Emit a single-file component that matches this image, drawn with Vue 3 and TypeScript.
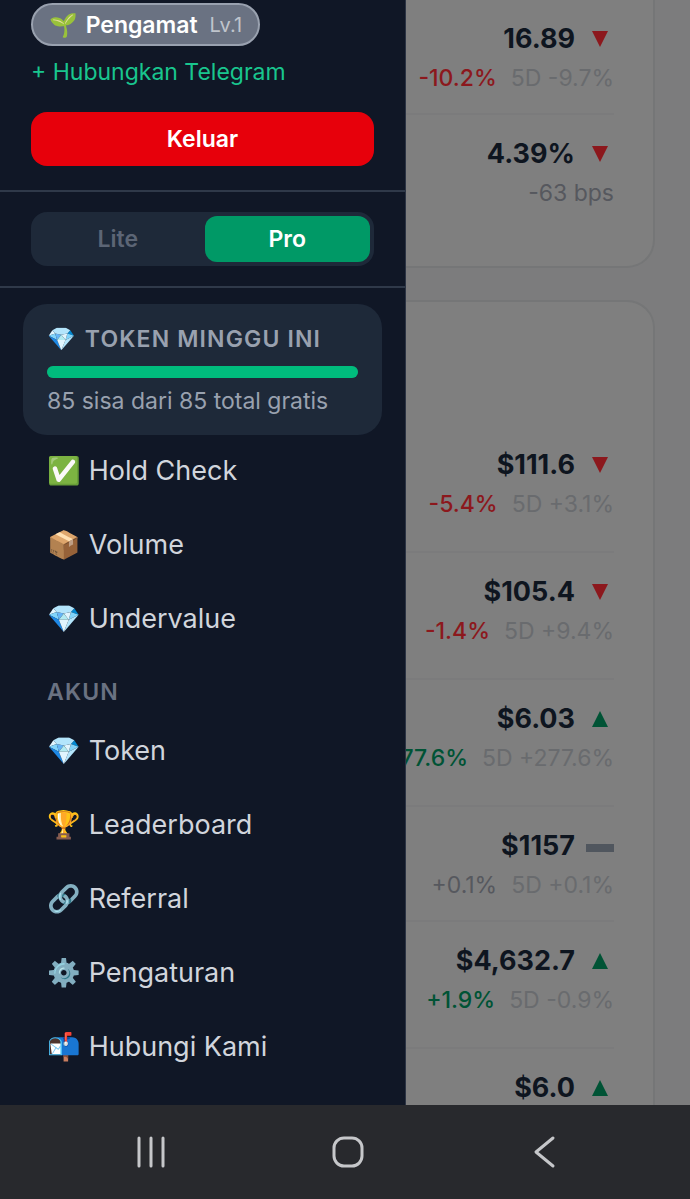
<script setup lang="ts">
import { ref } from 'vue'

type Trend = 'up' | 'down' | 'flat'
interface Quote {
  value: string
  trend: Trend
  change: string
  tone: 'pos' | 'neg' | 'mute'
  week?: string
  tall?: boolean
}
interface MenuItem {
  icon: string
  label: string
}

const rates: Quote[] = [
  { value: '16.89', trend: 'down', change: '-10.2%', tone: 'neg', week: '5D -9.7%' },
  { value: '4.39%', trend: 'down', change: '-63 bps', tone: 'mute' },
]
const commodities: Quote[] = [
  { value: '$111.6', trend: 'down', change: '-5.4%', tone: 'neg', week: '5D +3.1%', tall: true },
  { value: '$105.4', trend: 'down', change: '-1.4%', tone: 'neg', week: '5D +9.4%', tall: true },
  { value: '$6.03', trend: 'up', change: '+277.6%', tone: 'pos', week: '5D +277.6%', tall: true },
  { value: '$1157', trend: 'flat', change: '+0.1%', tone: 'mute', week: '5D +0.1%' },
  { value: '$4,632.7', trend: 'up', change: '+1.9%', tone: 'pos', week: '5D -0.9%', tall: true },
  { value: '$6.0', trend: 'up', change: '', tone: 'pos' },
]
const groups: Quote[][] = [rates, commodities]

const tools: MenuItem[] = [
  { icon: '✅', label: 'Hold Check' },
  { icon: '📦', label: 'Volume' },
  { icon: '💎', label: 'Undervalue' },
]
const account: MenuItem[] = [
  { icon: '💎', label: 'Token' },
  { icon: '🏆', label: 'Leaderboard' },
  { icon: '🔗', label: 'Referral' },
  { icon: '⚙️', label: 'Pengaturan' },
  { icon: '📬', label: 'Hubungi Kami' },
]

const shapes: Record<Trend, string> = {
  up: 'M14 6 22 22H6Z',
  down: 'M6 6H22L14 22Z',
  flat: 'M0 12H28V20H0Z',
}

const mode = ref<'Lite' | 'Pro'>('Pro')
const total = 85
const left = ref(85)
</script>

<template>
  <div class="screen">
    <div class="stage">
      <main class="page">
        <section v-for="(group, g) in groups" :key="g" class="card" :class="{ first: g === 0 }">
          <div v-for="q in group" :key="q.value" class="row" :class="{ tall: q.tall }">
            <div class="value">
              <span>{{ q.value }}</span>
              <svg class="trend" :class="q.trend" viewBox="0 0 28 28" aria-hidden="true">
                <path :d="shapes[q.trend]" />
              </svg>
            </div>
            <div class="delta">
              <span :class="q.tone">{{ q.change }}</span>
              <span v-if="q.week" class="week">{{ q.week }}</span>
            </div>
          </div>
        </section>
      </main>

      <aside class="drawer">
        <div class="profile">
          <div class="badge">
            <span class="badge-icon">🌱</span>
            <strong>Pengamat</strong>
            <small>Lv.1</small>
          </div>
          <a class="connect" href="#telegram">+ Hubungkan Telegram</a>
          <button class="logout" type="button">Keluar</button>
        </div>

        <div class="mode">
          <div class="switch">
            <button type="button" :class="{ on: mode === 'Lite' }" @click="mode = 'Lite'">Lite</button>
            <button type="button" :class="{ on: mode === 'Pro' }" @click="mode = 'Pro'">Pro</button>
          </div>
        </div>

        <div class="tokens">
          <h2><span class="token-icon">💎</span>TOKEN MINGGU INI</h2>
          <div class="track"><div class="fill" :style="{ width: (left / total) * 100 + '%' }"></div></div>
          <p>{{ left }} sisa dari {{ total }} total gratis</p>
        </div>

        <nav class="menu">
          <a v-for="m in tools" :key="m.label" href="#"><span class="icon">{{ m.icon }}</span>{{ m.label }}</a>
          <h3>AKUN</h3>
          <a v-for="m in account" :key="m.label" href="#"><span class="icon">{{ m.icon }}</span>{{ m.label }}</a>
        </nav>
      </aside>
    </div>

    <footer class="system">
      <button type="button" aria-label="Recent apps">
        <svg viewBox="0 0 36 36"><path d="M6 4V32M18 4V32M30 4V32" /></svg>
      </button>
      <button type="button" aria-label="Home">
        <svg viewBox="0 0 36 36"><rect x="4" y="4" width="28" height="28" rx="10" /></svg>
      </button>
      <button type="button" aria-label="Back">
        <svg viewBox="0 0 36 36"><path d="M26 4 9 18 26 32" /></svg>
      </button>
    </footer>
  </div>
</template>

<style>
body {
  margin: 0;
  background: #28292d;
}
</style>

<style scoped>
* {
  box-sizing: border-box;
}
.screen {
  height: 100vh;
  display: flex;
  flex-direction: column;
  font-family: Inter, "Noto Color Emoji", sans-serif;
  font-size: 23px;
  overflow: hidden;
}
.stage {
  flex: 1;
  min-height: 0;
  display: grid;
  overflow: hidden;
  background: #7c7c7d;
}
.page,
.drawer {
  grid-area: 1 / 1;
  min-height: 0;
}
.page {
  padding: 0 35px;
  overflow: hidden;
}
.card {
  background: #7f7f7f;
  border: 2px solid #757677;
  border-radius: 28px;
  padding: 124px 39px 36px;
  margin-bottom: 32px;
}
.card.first {
  border-top: 0;
  border-radius: 0 0 28px 28px;
  padding-top: 0;
}
.row {
  min-height: 115px;
  padding-top: 19px;
  border-bottom: 2px solid #7b7b7c;
}
.row.tall {
  min-height: 127px;
}
.row:last-child {
  border-bottom: 0;
}
.value,
.delta {
  display: flex;
  justify-content: flex-end;
  align-items: center;
  white-space: nowrap;
}
.value {
  gap: 11px;
  font-size: 27px;
  line-height: 40px;
  font-weight: 700;
  color: #0e151f;
}
.trend {
  width: 28px;
  height: 28px;
}
.up {
  fill: #005335;
}
.down {
  fill: #8c181d;
}
.flat {
  fill: #50565e;
}
.delta {
  gap: 14px;
  line-height: 38px;
}
.pos {
  color: #005335;
}
.neg {
  color: #8c181d;
}
.pos,
.neg {
  font-weight: 500;
}
.mute {
  color: #56585e;
}
.week {
  color: #696b6e;
}

.drawer {
  width: 406px;
  max-width: 90%;
  background: #101726;
  border-right: 1px solid #2c3444;
  color: #d1d5dc;
  overflow: hidden;
}
.profile {
  padding: 3px 31px 24px;
  display: flex;
  flex-direction: column;
  align-items: flex-start;
  border-bottom: 2px solid #2f3949;
}
.badge {
  display: flex;
  align-items: center;
  height: 43px;
  padding: 0 16px;
  border: 2px solid #99a1af;
  border-radius: 22px;
  background: #6a7282;
  color: #fff;
}
.badge-icon {
  margin-right: 8px;
}
.badge strong {
  font-weight: 600;
}
.badge small {
  margin-left: 12px;
  font-size: 20px;
  color: #bfc4cc;
}
.connect {
  margin: 10px 0 23px;
  line-height: 33px;
  color: #19c68e;
  text-decoration: none;
}
button {
  font: inherit;
  border: 0;
  padding: 0;
  cursor: pointer;
}
.logout {
  width: 100%;
  height: 54px;
  border-radius: 16px;
  background: #e7000b;
  color: #fff;
  font-weight: 600;
}
.mode {
  padding: 20px 31px;
  border-bottom: 2px solid #2f3949;
}
.switch {
  display: flex;
  gap: 4px;
  height: 54px;
  padding: 4px;
  border-radius: 16px;
  background: #1e2939;
}
.switch button {
  flex: 1;
  border-radius: 12px;
  background: transparent;
  color: #5c6575;
  font-weight: 600;
}
.switch .on {
  background: #009966;
  color: #fff;
}
.tokens {
  margin: 16px 23px 0;
  padding: 16px 24px;
  height: 131px;
  border-radius: 24px;
  background: #1e2939;
  color: #99a1af;
}
h2 {
  margin: 0;
  font-size: 23px;
  line-height: 38px;
  font-weight: 600;
  letter-spacing: 0.05em;
}
.token-icon {
  margin-right: 8px;
}
.track {
  height: 12px;
  margin: 8px 0 7px;
  border-radius: 6px;
  background: #364153;
}
.fill {
  height: 100%;
  border-radius: 6px;
  background: #00bc7d;
}
p {
  margin: 0;
  line-height: 32px;
}
.menu {
  display: flex;
  flex-direction: column;
  padding: 0 47px;
}
.menu a {
  display: flex;
  align-items: center;
  height: 70px;
  margin-bottom: 4px;
  font-size: 27px;
  color: #d1d5dc;
  text-decoration: none;
}
.icon {
  margin-right: 8px;
}
h3 {
  margin: 12px 0 0;
  font-size: 23px;
  line-height: 46px;
  font-weight: 600;
  letter-spacing: 0.05em;
  color: #6a7282;
}

.system {
  height: 94px;
  padding: 0 47px 0 53px;
  display: flex;
  background: #28292d;
}
.system button {
  flex: 1;
  background: transparent;
}
.system svg {
  width: 36px;
  height: 36px;
  display: block;
  margin: 0 auto;
  fill: none;
  stroke: #c6c7ca;
  stroke-width: 3;
  stroke-linecap: round;
  stroke-linejoin: round;
}
</style>
